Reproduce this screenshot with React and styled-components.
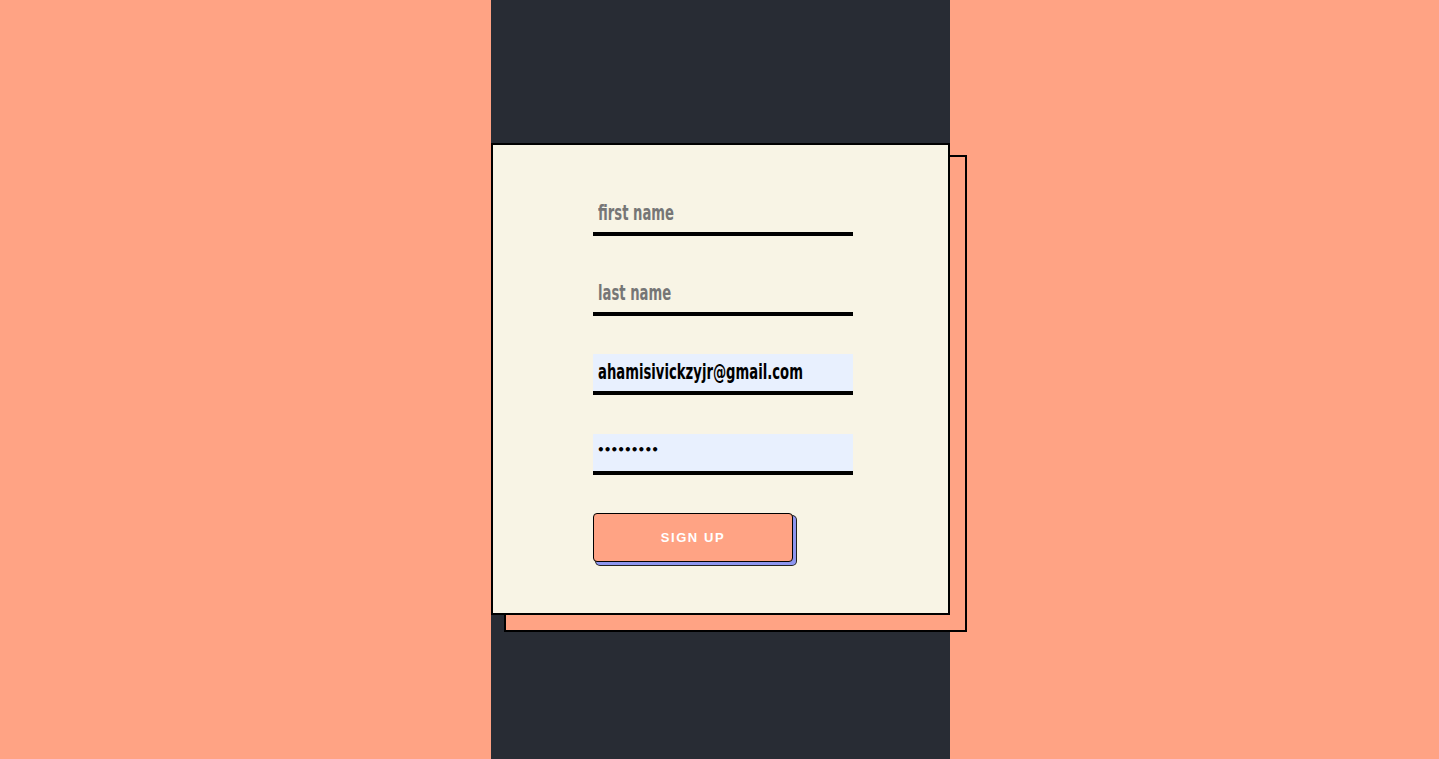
import React from "react";
import styled, { createGlobalStyle } from "styled-components";

const Global = createGlobalStyle`
  html, body { margin: 0; padding: 0; height: 100%; }
  body { background: #ffa384; font-family: "Liberation Sans", Arial, sans-serif; }
  #root { height: 100%; }
`;

const SCALE = 0.6;

const Page = styled.div`
  height: 759px;
  display: flex;
  justify-content: center;
`;

const Column = styled.div`
  width: 459px;
  margin-left: 2px;
  height: 100%;
  box-sizing: border-box;
  padding-top: 143px;
  background: #282c34;
`;

const Card = styled.div`
  position: relative;
  width: 459px;
  height: 472px;
  box-sizing: border-box;
  &::before {
    content: "";
    position: absolute;
    top: 12px;
    left: 13px;
    right: -17px;
    bottom: -17px;
    background: #ffa384;
    border: 2px solid #000;
  }
`;

const Face = styled.form`
  position: relative;
  height: 100%;
  box-sizing: border-box;
  background: #f8f4e5;
  border: 2px solid #000;
  padding: 50px 0 0 100px;
  display: flex;
  flex-direction: column;
  align-items: flex-start;
  gap: 38.5px;
`;

const FieldBox = styled.div`
  width: 260px;
  height: 41px;
  box-sizing: border-box;
  border-bottom: 4px solid #000;
  background: ${(p) => (p.$filled ? "#e8f0fe" : "transparent")};
  overflow: hidden;
`;

const Field = styled.input`
  display: block;
  width: ${260 / SCALE}px;
  height: 37px;
  box-sizing: border-box;
  border: none;
  background: transparent;
  padding: 0 0 2px ${5 / SCALE}px;
  transform: scaleX(${SCALE});
  transform-origin: left center;
  font-family: "DejaVu Sans", sans-serif;
  font-weight: bold;
  font-size: 22px;
  color: #000;
  outline: none;
  &::placeholder { color: #767676; opacity: 1; }
`;

const Secret = styled.input`
  display: block;
  width: 260px;
  height: 37px;
  box-sizing: border-box;
  border: none;
  background: transparent;
  padding: 0 0 5px 4px;
  font-family: "DejaVu Sans", sans-serif;
  font-weight: bold;
  font-size: 12px;
  letter-spacing: -0.9px;
  color: #000;
  outline: none;
`;

const Button = styled.button`
  width: 200px;
  height: 49px;
  background: #ffa384;
  border: 1px solid #000;
  border-radius: 4px;
  box-shadow: 3px 3px 0 0 #8d95ef, 3px 3px 0 1px #222;
  color: #fff;
  font-family: "Liberation Sans", Arial, sans-serif;
  font-weight: bold;
  font-size: 13px;
  letter-spacing: 1.6px;
  text-transform: uppercase;
  cursor: pointer;
`;

export default function App() {
  return (
    <Page>
      <Global />
      <Column>
        <Card>
          <Face onSubmit={(e) => e.preventDefault()}>
            <FieldBox>
              <Field type="text" placeholder="first name" />
            </FieldBox>
            <FieldBox>
              <Field type="text" placeholder="last name" />
            </FieldBox>
            <FieldBox $filled>
              <Field type="email" defaultValue="ahamisivickzyjr@gmail.com" />
            </FieldBox>
            <FieldBox $filled>
              <Secret type="password" defaultValue="123456789" />
            </FieldBox>
            <Button type="submit">Sign Up</Button>
          </Face>
        </Card>
      </Column>
    </Page>
  );
}
